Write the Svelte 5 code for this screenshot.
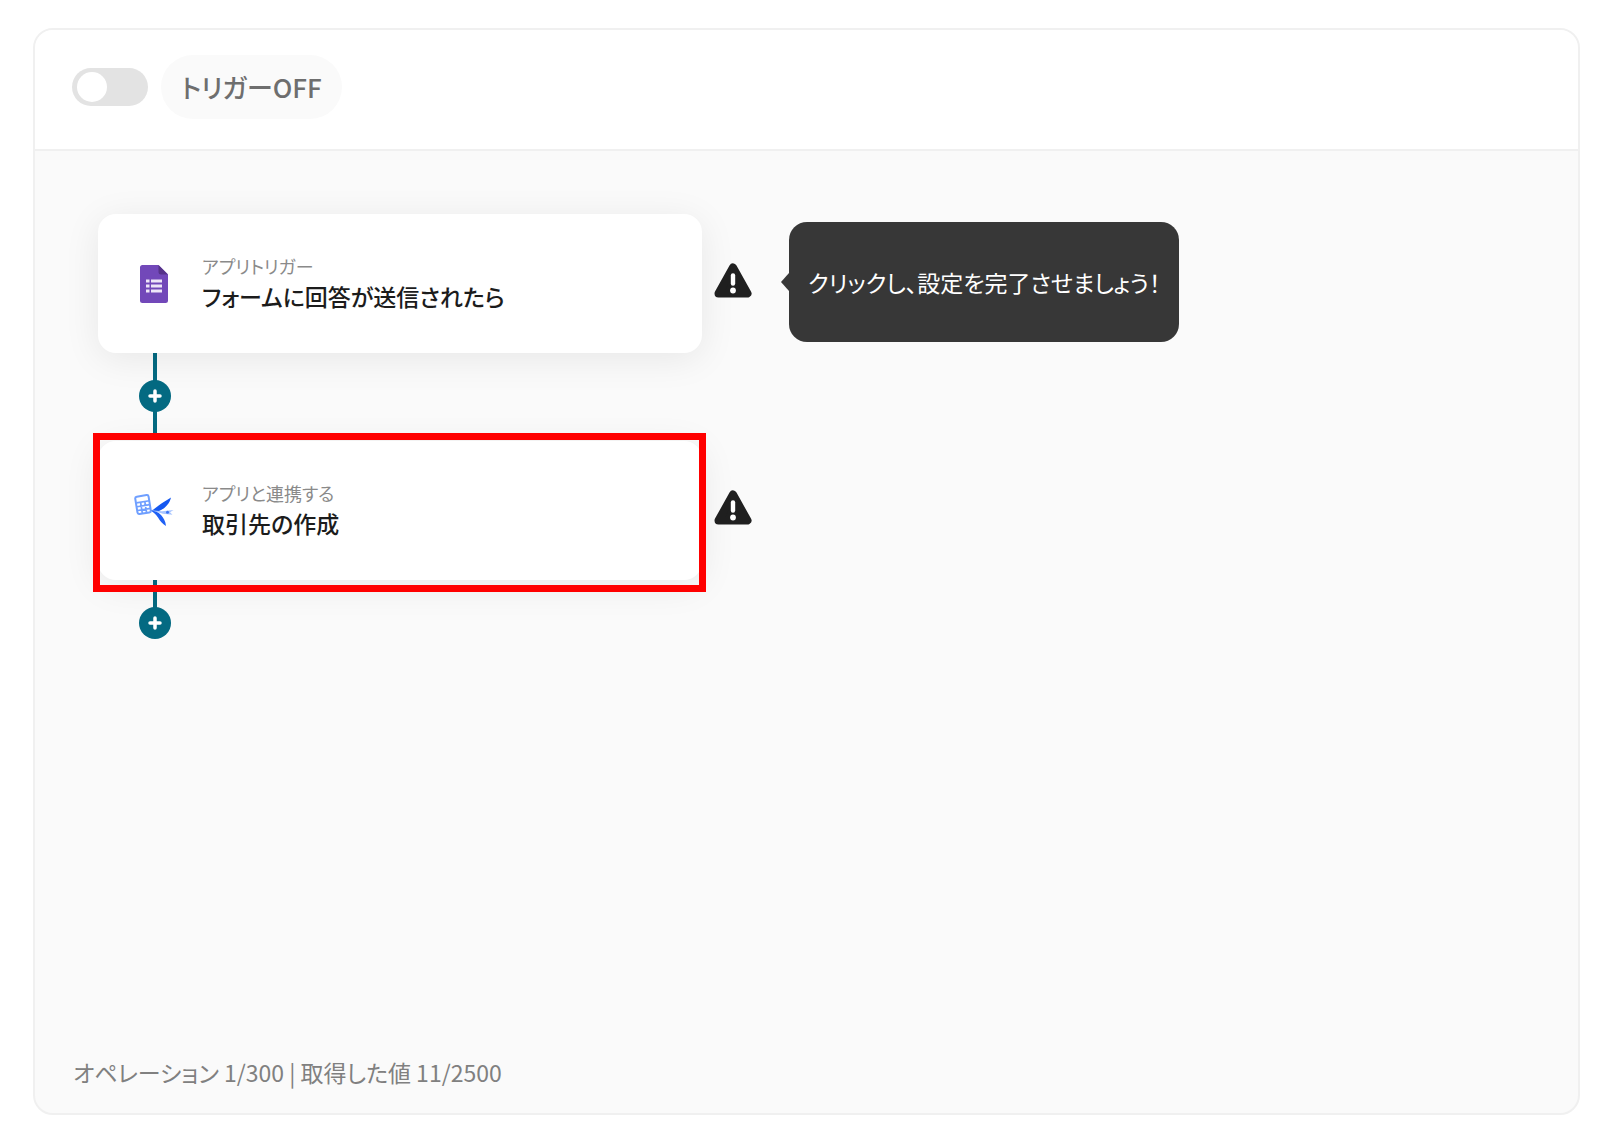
<script>
  let enabled = $state(false);

  const steps = [
    {
      icon: 'form',
      label: 'アプリトリガー',
      title: 'フォームに回答が送信されたら',
      hint: 'クリックし、設定を完了させましょう！',
      highlighted: false
    },
    {
      icon: 'ledger',
      label: 'アプリと連携する',
      title: '取引先の作成',
      hint: '',
      highlighted: true
    }
  ];
</script>

<div class="page">
  <main class="panel">
    <header class="bar">
      <input id="trigger" class="switch" type="checkbox" role="switch" bind:checked={enabled} />
      <label class="pill" for="trigger">トリガー{enabled ? 'ON' : 'OFF'}</label>
    </header>

    <section class="flow">
      {#each steps as step}
        <div class="step">
          <div class="card-wrap">
            <button class="card" type="button">
              <span class="app">
                {#if step.icon === 'form'}
                  <svg class="form-icon" viewBox="0 0 28 38" aria-hidden="true">
                    <path d="M2.5 0H18.500L28 9.500V35.500A2.500 2.500 0 0 1 25.500 38H2.500A2.500 2.500 0 0 1 0 35.500V2.500A2.500 2.500 0 0 1 2.500 0Z" fill="#7248b9" />
                    <path d="M18.500 0V7A2.500 2.500 0 0 0 21 9.500H28Z" fill="#563389" />
                    <g fill="#eee6f8">
                      <rect x="6" y="14.500" width="3.500" height="3" />
                      <rect x="11" y="14.500" width="11" height="3" />
                      <rect x="6" y="19.500" width="3.500" height="3" />
                      <rect x="11" y="19.500" width="11" height="3" />
                      <rect x="6" y="24.500" width="3.500" height="3" />
                      <rect x="11" y="24.500" width="11" height="3" />
                    </g>
                  </svg>
                {:else}
                  <svg class="ledger-icon" viewBox="0 0 40 34" aria-hidden="true">
                    <g transform="rotate(-9 9 12)" fill="none" stroke="#6f9fff">
                      <rect x="2.500" y="1.800" width="13.500" height="17.500" rx="1.800" stroke-width="2" />
                      <path d="M3 7.800H16M3 11.800H16M3 15.600H16M7.200 7.800V19M11.500 7.800V19" stroke-width="1.700" />
                    </g>
                    <path d="M17 16.800C20 15.200 21 14.500 24 12C28 9 32 6.500 37 3.500C35.500 10 30.500 15 24.500 17.300Z" fill="#1558f0" />
                    <path d="M17 16.300L28 17.200L39.500 16L36 18.300L38.500 20.800L29 19.800Z" fill="#a9c6ff" />
                    <path d="M17 16.800C21 17 24 18 27 21C29.500 24 31.500 27 32 32C28.500 30 26 27 24 23.500C22 20.500 20 19 17 16.800Z" fill="#1f60f5" />
                    <circle cx="33.500" cy="18.300" r="1.500" fill="#3c75f5" />
                  </svg>
                {/if}
              </span>
              <span class="copy">
                <span class="kind">{step.label}</span>
                <span class="title">{step.title}</span>
              </span>
            </button>
            {#if step.highlighted}<span class="frame"></span>{/if}
          </div>

          <svg class="warn" viewBox="0 0 38 35" role="img" aria-label="未設定">
            <path d="M19 4.500L33.500 30.500H4.500Z" fill="#202020" stroke="#202020" stroke-width="8" stroke-linejoin="round" />
            <path d="M19 12.500V20.500" stroke="#fff" stroke-width="4.400" stroke-linecap="round" />
            <circle cx="19" cy="27.500" r="2.900" fill="#fff" />
          </svg>

          {#if step.hint}
            <p class="hint">{step.hint}</p>
          {/if}
        </div>
        <div class="link">
          <button class="add" type="button" aria-label="追加">
            <svg viewBox="0 0 32 32" aria-hidden="true">
              <path d="M16 11V21M11 16H21" stroke="#fff" stroke-width="3.500" stroke-linecap="round" />
            </svg>
          </button>
        </div>
      {/each}
    </section>

    <footer class="usage">オペレーション 1/300 | 取得した値 11/2500</footer>
  </main>
</div>

<style>
  :global(body) {
    margin: 0;
    background: #fff;
  }
  .page {
    box-sizing: border-box;
    min-height: 100vh;
    padding: 28px 20px 15px 33px;
    display: flex;
    font-family: 'Noto Sans CJK JP', sans-serif;
    font-feature-settings: 'palt';
  }
  .panel {
    flex: 1;
    display: flex;
    flex-direction: column;
    border: 2px solid #f0f0f0;
    border-radius: 20px;
    background: #fafafa;
    overflow: hidden;
  }
  .bar {
    display: flex;
    align-items: center;
    gap: 13px;
    padding: 25px 37px 30px;
    background: #fff;
    border-bottom: 2px solid #f0f0f0;
  }
  .switch {
    appearance: none;
    box-sizing: border-box;
    width: 76px;
    height: 38px;
    margin: 0;
    padding: 4px 5px;
    border-radius: 19px;
    background: #e3e3e3;
    cursor: pointer;
  }
  .switch::before {
    content: '';
    display: block;
    width: 30px;
    height: 30px;
    border-radius: 50%;
    background: #fff;
  }
  .switch:checked {
    background: #046a82;
  }
  .switch:checked::before {
    margin-left: auto;
  }
  .pill {
    padding: 0 20px;
    border-radius: 32px;
    background: #fafafa;
    color: #6e6e6e;
    font-size: 26px;
    font-weight: 500;
    line-height: 64px;
  }
  .flow {
    flex: 1;
    padding: 63px 63px 0;
  }
  .step {
    display: flex;
    align-items: center;
  }
  .card-wrap {
    position: relative;
    flex: 0 1 604px;
  }
  .card {
    box-sizing: border-box;
    width: 100%;
    min-height: 139px;
    display: flex;
    align-items: center;
    gap: 28px;
    padding: 0 36px;
    border: 0;
    border-radius: 18px;
    background: #fff;
    box-shadow: 0 6px 36px rgba(0, 0, 0, 0.08);
    font: inherit;
    font-feature-settings: inherit;
    text-align: left;
    cursor: pointer;
  }
  .app {
    display: flex;
    justify-content: center;
    width: 40px;
  }
  .form-icon {
    width: 28px;
    height: 38px;
  }
  .ledger-icon {
    width: 40px;
    height: 34px;
  }
  .copy {
    display: flex;
    flex-direction: column;
    padding-bottom: 4px;
  }
  .kind {
    color: #8a8a8a;
    font-size: 18px;
    line-height: 28px;
  }
  .title {
    color: #1c1c1c;
    font-size: 23px;
    font-weight: 500;
    line-height: 32px;
  }
  .frame {
    position: absolute;
    inset: -8px -4px -12px -5px;
    border: 7px solid #f00;
    pointer-events: none;
  }
  .warn {
    flex: none;
    width: 38px;
    height: 35px;
    margin: 0 0 6px 12px;
  }
  .hint {
    position: relative;
    margin: 0 0 3px 37px;
    padding: 0 19px;
    border-radius: 18px;
    background: #373737;
    color: #fff;
    font-size: 23px;
    line-height: 120px;
  }
  .hint::before {
    content: '';
    position: absolute;
    left: -8px;
    top: 50%;
    margin-top: -9px;
    border: 9px solid transparent;
    border-left: 0;
    border-right: 8px solid #373737;
  }
  .link {
    width: 32px;
    height: 88px;
    margin-left: 41px;
    padding-top: 27px;
    box-sizing: border-box;
    background: linear-gradient(#046a82, #046a82) top / 4px 84px no-repeat;
  }
  .link:last-child {
    height: 59px;
    background-size: 4px 40px;
  }
  .add {
    display: block;
    width: 32px;
    height: 32px;
    padding: 0;
    border: 0;
    border-radius: 50%;
    background: #046a82;
    cursor: pointer;
  }
  .add svg {
    display: block;
  }
  .usage {
    padding: 0 38px 25px;
    color: #808080;
    font-size: 23px;
    line-height: 32px;
  }
</style>
